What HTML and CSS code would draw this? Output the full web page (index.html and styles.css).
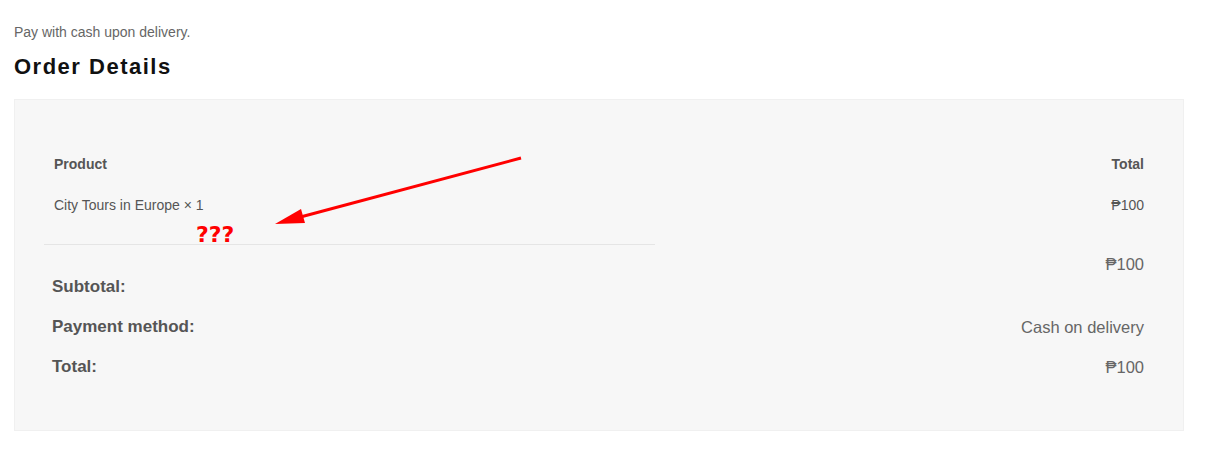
FILE: index.html
```html
<!DOCTYPE html>
<html lang="en">
  <head>
    <meta charset="UTF-8" />
    <meta name="viewport" content="width=device-width, initial-scale=1.0" />
    <title>Order received</title>
    <link rel="stylesheet" href="styles.css">
  </head>
  <body>
    <p class="note">Pay with cash upon delivery.</p>
    <h2 class="title">Order Details</h2>

    <div class="order-box">
      <div class="order-head">
        <span>Product</span>
        <span>Total</span>
      </div>
      <div class="order-item">
        <span>City Tours in Europe × 1</span>
        <span>₱100</span>
      </div>
      <div class="divider"></div>

      <div class="totals">
        <div class="row subtotal">
          <span class="label">Subtotal:</span>
          <span class="value">₱100</span>
        </div>
        <div class="row">
          <span class="label">Payment method:</span>
          <span class="value">Cash on delivery</span>
        </div>
        <div class="row">
          <span class="label">Total:</span>
          <span class="value">₱100</span>
        </div>
      </div>

      <!-- annotation -->
      <svg class="arrow" width="260" height="80" viewBox="0 0 260 80">
        <line x1="256" y1="9" x2="28" y2="70" stroke="#f00" stroke-width="3" />
        <polygon points="10,75 36,60 40,74" fill="#f00" />
      </svg>
      <span class="qmarks">???</span>
    </div>
  </body>
</html>
```

FILE: styles.css
```css
body {
  font-family: "Liberation Sans", Arial, sans-serif;
  margin: 0;
  padding: 24px 35px 0 14px;
  background: #fff;
  color: #555;
}
.note {
  margin: 0;
  font-size: 14px;
  line-height: 16px;
  color: #666;
}
.title {
  margin: 14px 0 19px;
  font-size: 22px;
  line-height: 26px;
  letter-spacing: 1.5px;
  color: #111;
}
.order-box {
  position: relative;
  background: #f7f7f7;
  border: 1px solid #f0f0f0;
  padding: 56px 39px 53px 29px;
}
.order-head,
.order-item {
  display: flex;
  justify-content: space-between;
  padding: 0 0 0 10px;
  font-size: 14px;
  line-height: 16px;
}
.order-head {
  font-weight: bold;
}
.order-item {
  margin-top: 25px;
}
.divider {
  width: 611px;
  height: 1px;
  background: #e5e5e5;
  margin-top: 31px;
}
.totals {
  padding-left: 8px;
  font-size: 17px;
  line-height: 20px;
}
.row {
  display: flex;
  justify-content: space-between;
  align-items: flex-start;
  margin-top: 20px;
}
.row .label {
  font-weight: bold;
}
.row .value {
  color: #666;
  font-size: 16.5px;
}
.subtotal {
  margin-top: 9px;
}
.subtotal .label {
  padding-top: 23px;
}
.arrow {
  position: absolute;
  left: 250px;
  top: 49px;
}
.qmarks {
  position: absolute;
  left: 181px;
  top: 122px;
  font-family: "DejaVu Sans", sans-serif;
  font-size: 22px;
  line-height: 26px;
  font-weight: bold;
  color: #f00;
}
```
